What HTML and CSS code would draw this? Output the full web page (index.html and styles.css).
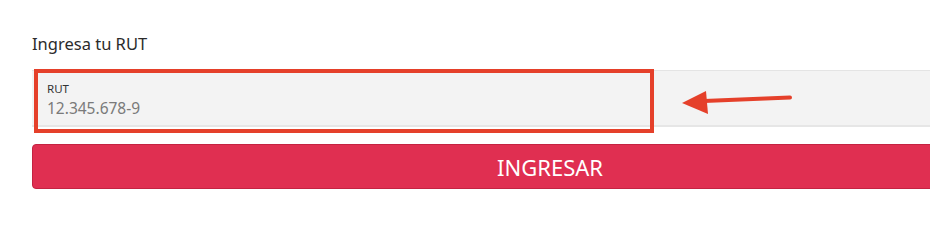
FILE: index.html
```html
<!DOCTYPE html>
<html>
  <head>
    <meta charset="UTF-8">
    <title>Ingresa tu RUT</title>
    <link rel="stylesheet" href="styles.css">
  </head>
  <body>
    <div class="login-form">
      <p class="form-title">Ingresa tu RUT</p>
      <div class="field-wrap">
        <div class="rut-field">
          <span class="rut-label">RUT</span>
          <span class="rut-value">12.345.678-9</span>
        </div>
        <!-- annotation over the field -->
        <div class="mark-box"></div>
        <svg class="mark-arrow" width="120" height="30" viewBox="0 0 120 30">
          <path d="M22 15 L108 11.5" stroke="#e5402a" stroke-width="4" stroke-linecap="round" fill="none"/>
          <path d="M0 17 L24 5 L26 28 Z" fill="#e5402a"/>
        </svg>
      </div>
      <button class="submit-btn">INGRESAR</button>
    </div>
  </body>
</html>
```

FILE: styles.css
```css
body {
  margin: 0;
  background-color: #fff;
  font-family: "Noto Sans", sans-serif;
  overflow: hidden;
}

/* Form block */
.login-form {
  width: 1036px;
  padding: 34px 0 0 32px;
}

.form-title {
  margin: 0 0 16px 0;
  font-size: 16.5px;
  color: #2b2b2b;
  line-height: 20px;
}

/* RUT input */
.field-wrap {
  position: relative;
}

.rut-field {
  display: flex;
  flex-direction: column;
  height: 57px;
  padding: 0 15px;
  background-color: #f3f3f3;
  border-top: 1px solid #e4e4e4;
  border-bottom: 2px solid #e6e6e6;
  box-sizing: border-box;
}

.rut-label {
  margin-top: 11px;
  font-size: 11.5px;
  line-height: 13px;
  color: #333;
}

.rut-value {
  margin-top: 4px;
  font-size: 15.5px;
  line-height: 19px;
  color: #7a7a7a;
}

/* Red annotation */
.mark-box {
  position: absolute;
  left: 2px;
  top: -1px;
  width: 612px;
  height: 56px;
  border: 4px solid #e5402a;
}

.mark-arrow {
  position: absolute;
  left: 650px;
  top: 16px;
}

/* Submit button */
.submit-btn {
  display: block;
  width: 1036px;
  height: 45px;
  margin-top: 17px;
  border: 1px solid #c42342;
  border-radius: 4px;
  background-color: #e02f51;
  color: #fff;
  font-family: "Noto Sans", sans-serif;
  font-size: 22px;
  cursor: pointer;
}
```
